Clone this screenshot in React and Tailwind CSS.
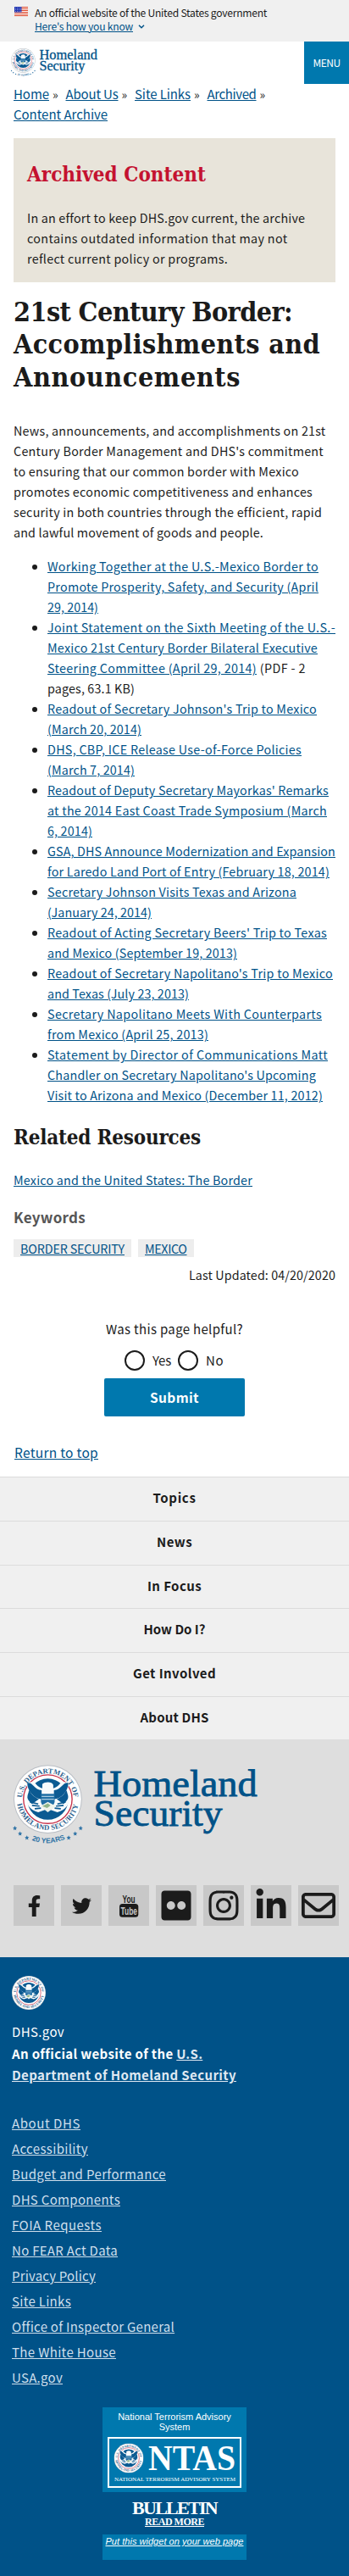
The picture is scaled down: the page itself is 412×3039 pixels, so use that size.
import { useId, useLayoutEffect, useRef, useState } from 'react'
import { FaFacebookF, FaTwitter, FaFlickr, FaInstagram, FaLinkedinIn } from 'react-icons/fa'
import { FaRegEnvelope } from 'react-icons/fa6'

const HEADING = "font-['DejaVu_Serif_Condensed','DejaVu_Serif',serif] font-bold"

// Tracks a run of text out (or in) so that it sets to the given measure.
function Fit({ w, children }) {
  const ref = useRef(null)
  const [spacing, setSpacing] = useState(0)
  useLayoutEffect(() => {
    const natural = ref.current.getBoundingClientRect().width
    setSpacing((w - natural) / children.length)
  }, [w, children])
  return <span ref={ref} style={{ letterSpacing: spacing + 'px' }}>{children}</span>
}

function SealArt({ years }) {
  const id = useId()
  return (
    <>
      <defs>
        <path id={id + 't'} d="M12.2 50 A37.8 37.8 0 0 1 87.8 50" />
        <path id={id + 'b'} d="M5 50 A45 45 0 0 0 95 50" />
        <path id={id + 'y'} d="M20 107 Q50 122 82 105" />
      </defs>
      <circle cx="50" cy="50" r="50" fill="#b9bec4" />
      <circle cx="50" cy="50" r="48.8" fill="#fff" />
      <circle cx="50" cy="50" r="35.5" fill="none" stroke="#c8324b" strokeWidth="1.7" />
      <circle cx="50" cy="50" r="30" fill="#0b5a92" />
      <path d="M22 33 C17 30 19 25 25 25 C33 24 34 33 42 34 L42 28 C46 24 56 24 58 29 L58 34 C66 33 67 24 75 25 C81 25 83 30 78 33 C76 42 70 47 63 50 L73 57 C79 52 80 48 81 45 C83 57 76 66 64 69 L50 64 L36 69 C24 66 17 57 19 45 C20 48 21 52 27 57 L37 50 C30 47 24 42 22 33Z" fill="#f7fafc" />
      <path d="M20 26 C29 25 30 36 41 37 L41 50 C30 49 20 38 20 26Z M80 26 C71 25 70 36 59 37 L59 50 C70 49 80 38 80 26Z" fill="#0b5a92" />
      <path d="M24 54 L36 57 M27 59 L38 60 M31 64 L40 63 M76 54 L64 57 M73 59 L62 60 M69 64 L60 63" stroke="#0b5a92" strokeWidth="2" />
      <path d="M40 42 H60 V54 C59 59 55 62 50 64 C45 62 41 59 40 54Z" fill="#1f6ea5" />
      <path d="M41 46 H59 M41 50 H59" stroke="#a9cbe0" strokeWidth="1.3" />
      <path d="M39 60 L50 54 L62 60 L50 69Z" fill="#eef3ec" />
      <path d="M42 60 L50 56 L54 59 L49 63Z" fill="#8fb58a" />
      <g fill="#2b5f8e" fontFamily="'Liberation Serif', serif" fontSize="10.6" fontWeight="bold">
        <text textLength="114" lengthAdjust="spacing"><textPath href={'#' + id + 't'} startOffset="2">U.S. DEPARTMENT OF</textPath></text>
        <text textLength="126" lengthAdjust="spacing"><textPath href={'#' + id + 'b'} startOffset="7">HOMELAND SECURITY</textPath></text>
      </g>
      {years && (
        <g fill="#3174a6">
          <text fontFamily="'Liberation Sans', sans-serif" fontSize="10.5" fontWeight="bold">
            <textPath href={'#' + id + 'y'} startOffset="50%" textAnchor="middle">20 YEARS</textPath>
          </text>
          {[[2, 92], [9.5, 100], [19.5, 106], [80.5, 106], [90, 100], [98, 92]].map(([x, y]) => (
            <path key={x} transform={`translate(${x} ${y})`} d="M0 -3.2 L1 -1 3.2 -.8 1.5 .8 2 3.2 0 2 -2 3.2 -1.5 .8 -3.2 -.8 -1 -1Z" />
          ))}
        </g>
      )}
    </>
  )
}

function Seal({ className }) {
  return <svg viewBox="0 0 100 100" className={className}><SealArt /></svg>
}

function Logo({ className }) {
  return (
    <svg viewBox="0 0 360 122" className={'overflow-visible ' + className}>
      <SealArt years />
      <g fill="#005288" stroke="#005288" strokeWidth="1" fontFamily="'Liberation Serif', serif" fontSize="55">
        <text x="117" y="46" textLength="239" lengthAdjust="spacingAndGlyphs">Homeland</text>
        <text x="117" y="89" textLength="188" lengthAdjust="spacingAndGlyphs">Security</text>
      </g>
    </svg>
  )
}

function Flag() {
  return (
    <svg viewBox="0 0 16 11" className="h-[11px] w-4">
      <rect width="16" height="11" fill="#fff" />
      {[0, 2, 4, 6, 8, 10].map((y) => <rect key={y} y={y} width="16" height="1" fill="#db3e1f" />)}
      <rect width="8.5" height="6.5" fill="#1e33b1" />
      {[1, 3, 5].map((y) => [1, 3, 5, 7].map((x) => <rect key={x + '-' + y} x={x} y={y} width="0.8" height="0.8" fill="#dfe3fa" />))}
    </svg>
  )
}

function YouTubeMark() {
  return (
    <svg viewBox="0 0 24 28" className="h-7 w-6 overflow-visible" fontFamily="'Liberation Sans', sans-serif" fontWeight="bold">
      <text x="4.500" y="10.500" fontSize="13.5" textLength="15" lengthAdjust="spacingAndGlyphs" fill="#1b1b1b">You</text>
      <rect x="1" y="12" width="22.300" height="15.800" rx="3.5" fill="#1b1b1b" />
      <text x="2.500" y="24.500" fontSize="12.5" textLength="19.500" lengthAdjust="spacingAndGlyphs" fill="#c8c8c8">Tube</text>
    </svg>
  )
}

const crumbs = [['Home', 42], ['About Us', 62], ['Site Links', 66], ['Archived', 58]]

const announcements = [
  [[['Working Together at the U.S.-Mexico Border to', 320], ['Promote Prosperity, Safety, and Security (April', 320], ['29, 2014)', 60]]],
  [[['Joint Statement on the Sixth Meeting of the U.S.-', 340], ['Mexico 21st Century Border Bilateral Executive', 319], ['Steering Committee (April 29, 2014)', 247]], [[' (PDF - 2', 58], ['pages, 63.1 KB)', 103]]],
  [[["Readout of Secretary Johnson's Trip to Mexico", 318], ['(March 20, 2014)', 111]]],
  [[['DHS, CBP, ICE Release Use-of-Force Policies', 300], ['(March 7, 2014)', 103]]],
  [[["Readout of Deputy Secretary Mayorkas' Remarks", 332], ['at the 2014 East Coast Trade Symposium (March', 330], ['6, 2014)', 53]]],
  [[['GSA, DHS Announce Modernization and Expansion', 340], ['for Laredo Land Port of Entry (February 18, 2014)', 333]]],
  [[['Secretary Johnson Visits Texas and Arizona', 294], ['(January 24, 2014)', 123]]],
  [[["Readout of Acting Secretary Beers' Trip to Texas", 330], ['and Mexico (September 19, 2013)', 224]]],
  [[["Readout of Secretary Napolitano's Trip to Mexico", 337], ['and Texas (July 23, 2013)', 167]]],
  [[['Secretary Napolitano Meets With Counterparts', 324], ['from Mexico (April 25, 2013)', 190]]],
  [[['Statement by Director of Communications Matt', 331], ["Chandler on Secretary Napolitano's Upcoming", 317], ['Visit to Arizona and Mexico (December 11, 2012)', 325]]],
]

const sections = [['Topics', 51], ['News', 42], ['In Focus', 64], ['How Do I?', 73], ['Get Involved', 98], ['About DHS', 81]]

const footerLinks = [
  ['About DHS', 81], ['Accessibility', 90], ['Budget and Performance', 182], ['DHS Components', 128], ['FOIA Requests', 106], ['No FEAR Act Data', 125],
  ['Privacy Policy', 99], ['Site Links', 70], ['Office of Inspector General', 192], ['The White House', 123], ['USA.gov', 60],
]

const social = [
  ['Facebook', <FaFacebookF key="f" className="size-[25px]" />],
  ['Twitter', <FaTwitter key="t" className="size-[23px]" />],
  ['YouTube', <YouTubeMark key="y" />],
  ['Flickr', <FaFlickr key="k" className="size-10" />],
  ['Instagram', <FaInstagram key="i" className="size-10" />],
  ['LinkedIn', <FaLinkedinIn key="l" className="size-10" />],
  ['Email', <FaRegEnvelope key="e" className="size-10" />],
]

function Lines({ lines }) {
  return lines.map(([line, w], i) => (
    <span key={i}>{i > 0 && <br />}<Fit w={w}>{line}</Fit></span>
  ))
}

function Link({ children, className = 'text-[#005288]' }) {
  return <a href="#" className={'underline ' + className}>{children}</a>
}

export default function App() {
  return (
    <div className="w-[412px] bg-white font-['Noto_Sans_CJK_SC',sans-serif] text-[14.3px] leading-6 whitespace-nowrap text-[#1b1b1b]">
      <div className="flex h-[49px] gap-2 bg-[#f0f0f0] pt-2 pl-[17px]">
        <Flag />
        <div className="-mt-[1px] text-[12.1px] leading-4">
          <p><Fit w={274}>An official website of the United States government</Fit></p>
          <p className="flex items-center gap-1.5">
            <Link><Fit w={116}>Here's how you know</Fit></Link>
            <svg viewBox="0 0 8 5" className="h-[5px] w-2"><path d="M1 .8 L4 3.8 L7 .8" fill="none" stroke="#005288" strokeWidth="1.5" /></svg>
          </p>
        </div>
      </div>

      <header className="flex h-[50px] justify-between">
        <Logo className="mt-2 ml-[13px] h-[35px] w-[103px]" />
        <button className="h-[50px] w-[53px] bg-[#0078ae] text-[12px] text-white"><Fit w={32}>MENU</Fit></button>
      </header>

      <nav className="px-4 text-[15px]">
        {crumbs.map(([c, w]) => (
          <span key={c}><Link><Fit w={w}>{c}</Fit></Link><span className="mr-[9px] ml-1 text-[14px]"><Fit w={6.5}>»</Fit></span></span>
        ))}
        <br />
        <Link><Fit w={111}>Content Archive</Fit></Link>
      </nav>

      <main className="px-4 pt-4">
        <section className="h-[170px] bg-[#e8e4da] px-4 pt-[27px]">
          <h2 className={HEADING + ' text-[24px] leading-[32px] text-[#c41230]'}><Fit w={211}>Archived Content</Fit></h2>
          <p className="mt-[23px]">
            <Lines lines={[['In an effort to keep DHS.gov current, the archive', 328], ['contains outdated information that may not', 307.5], ['reflect current policy or programs.', 237]]} />
          </p>
        </section>

        <h1 className={HEADING + ' mt-4 text-[32px] leading-[38.4px]'}>
          <Lines lines={[['21st Century Border:', 329], ['Accomplishments and', 362], ['Announcements', 268]]} />
        </h1>

        <p className="mt-8">
          <Lines lines={[['News, announcements, and accomplishments on 21st', 368.5], ["Century Border Management and DHS's commitment", 366], ['to ensuring that our common border with Mexico', 337], ['promotes economic competitiveness and enhances', 353], ['security in both countries through the efficient, rapid', 364], ['and lawful movement of goods and people.', 295]]} />
        </p>

        <ul className="mt-4 list-disc pl-10">
          {announcements.map(([link, note], i) => (
            <li key={i}><Link><Lines lines={link} /></Link>{note && <Lines lines={note} />}</li>
          ))}
        </ul>

        <h2 className={HEADING + ' mt-[23px] text-[24px] leading-[30px]'}><Fit w={221}>Related Resources</Fit></h2>
        <p className="mt-[23px]"><Link><Fit w={282}>Mexico and the United States: The Border</Fit></Link></p>
        <h3 className="mt-5 text-[17px] leading-6 font-bold text-[#565656]"><Fit w={85}>Keywords</Fit></h3>
        <div className="mt-[14px] flex gap-2 leading-[21px]">
          {[['BORDER SECURITY', 123], ['MEXICO', 49.5]].map(([k, w]) => (
            <span key={k} className="bg-[#ededed] px-2"><Link><Fit w={w}>{k}</Fit></Link></span>
          ))}
        </div>
        <p className="mt-[9px] text-right"><Fit w={173}>Last Updated: 04/20/2020</Fit></p>

        <form className="mt-10 flex flex-col items-center text-[15px]">
          <p><Fit w={162}>Was this page helpful?</Fit></p>
          <div className="mt-[13px] flex gap-2 pr-[1px]">
            {[['Yes', 22], ['No', 21]].map(([o, w]) => (
              <label key={o} className="flex items-center gap-[9px]">
                <span className="size-6 rounded-full border-2 border-[#1b1b1b] bg-white" />
                <Fit w={w}>{o}</Fit>
              </label>
            ))}
          </div>
          <button type="button" className="mt-[9px] h-[45px] w-[166px] rounded-[2px] bg-[#0078ae] pb-[1px] text-[15.5px] font-bold text-white"><Fit w={58}>Submit</Fit></button>
        </form>

        <p className="mt-[30px] pb-[17px] pl-px text-[15.5px]"><Link><Fit w={99}>Return to top</Fit></Link></p>
      </main>

      <nav className="text-center text-[15px] font-bold">
        {sections.map(([s, w]) => (
          <div key={s} className="h-[51.67px] border-t border-[#dcdcdc] bg-[#f0f0f0] pt-3"><Fit w={w}>{s}</Fit></div>
        ))}
      </nav>

      <section className="h-[257px] bg-[#dedede] pt-[30px] pl-4">
        <Logo className="h-[99px] w-[291px]" />
        <div className="mt-[43px] flex gap-2 text-[#1b1b1b]">
          {social.map(([name, icon]) => (
            <a key={name} href="#" aria-label={name} className="flex size-12 items-center justify-center bg-[#c8c8c8]">{icon}</a>
          ))}
        </div>
      </section>

      <footer className="h-[730px] bg-[#005288] px-[14px] pt-[22px] text-[15px] text-white">
        <Seal className="size-10" />
        <div className="mt-[13px] leading-[25.6px]">
          <p><Fit w={62}>DHS.gov</Fit></p>
          <p className="font-bold"><Fit w={194}>An official website of the </Fit><Link className="text-[#dfe8f2]"><Lines lines={[['U.S.', 31], ['Department of Homeland Security', 265]]} /></Link></p>
        </div>
        <ul className="mt-[29px] leading-[30px]">
          {footerLinks.map(([l, w]) => <li key={l}><Link className="text-[#cfdfec]"><Fit w={w}>{l}</Fit></Link></li>)}
        </ul>
        <div className="mt-5 ml-[107px] w-[170px] text-center font-['Liberation_Sans',sans-serif] text-[11px] leading-3">
          <div className="flex h-[100px] flex-col items-center bg-[#0078ae] pt-[5px]">
            <p>National Terrorism Advisory<br />System</p>
            <div className="mt-[6px] h-[60px] w-[158px] border-2 border-white">
              <svg viewBox="0 0 154 56" className="h-14 w-[154px]" fontFamily="'Liberation Serif', serif" fill="#fff">
                <svg x="5.500" y="5.500" width="35" height="35" viewBox="0 0 100 100"><SealArt /></svg>
                <text x="46" y="36.500" fontSize="42" fontWeight="bold" textLength="103" lengthAdjust="spacingAndGlyphs">NTAS</text>
                <text x="6" y="49.500" fontSize="7" textLength="143" lengthAdjust="spacingAndGlyphs">NATIONAL TERRORISM ADVISORY SYSTEM</text>
              </svg>
            </div>
          </div>
          <div className="flex h-[50px] flex-col items-center pt-[9px] font-['Liberation_Serif',serif] font-bold">
            <span className="text-[22px] leading-[19px]"><Fit w={100}>BULLETIN</Fit></span>
            <span className="text-[12px] leading-[15px] underline"><Fit w={70}>READ MORE</Fit></span>
          </div>
          <div className="h-[30px] bg-[#0078ae] pt-[2px] italic"><Link className="text-white"><Fit w={163}>Put this widget on your web page</Fit></Link></div>
        </div>
      </footer>
    </div>
  )
}
